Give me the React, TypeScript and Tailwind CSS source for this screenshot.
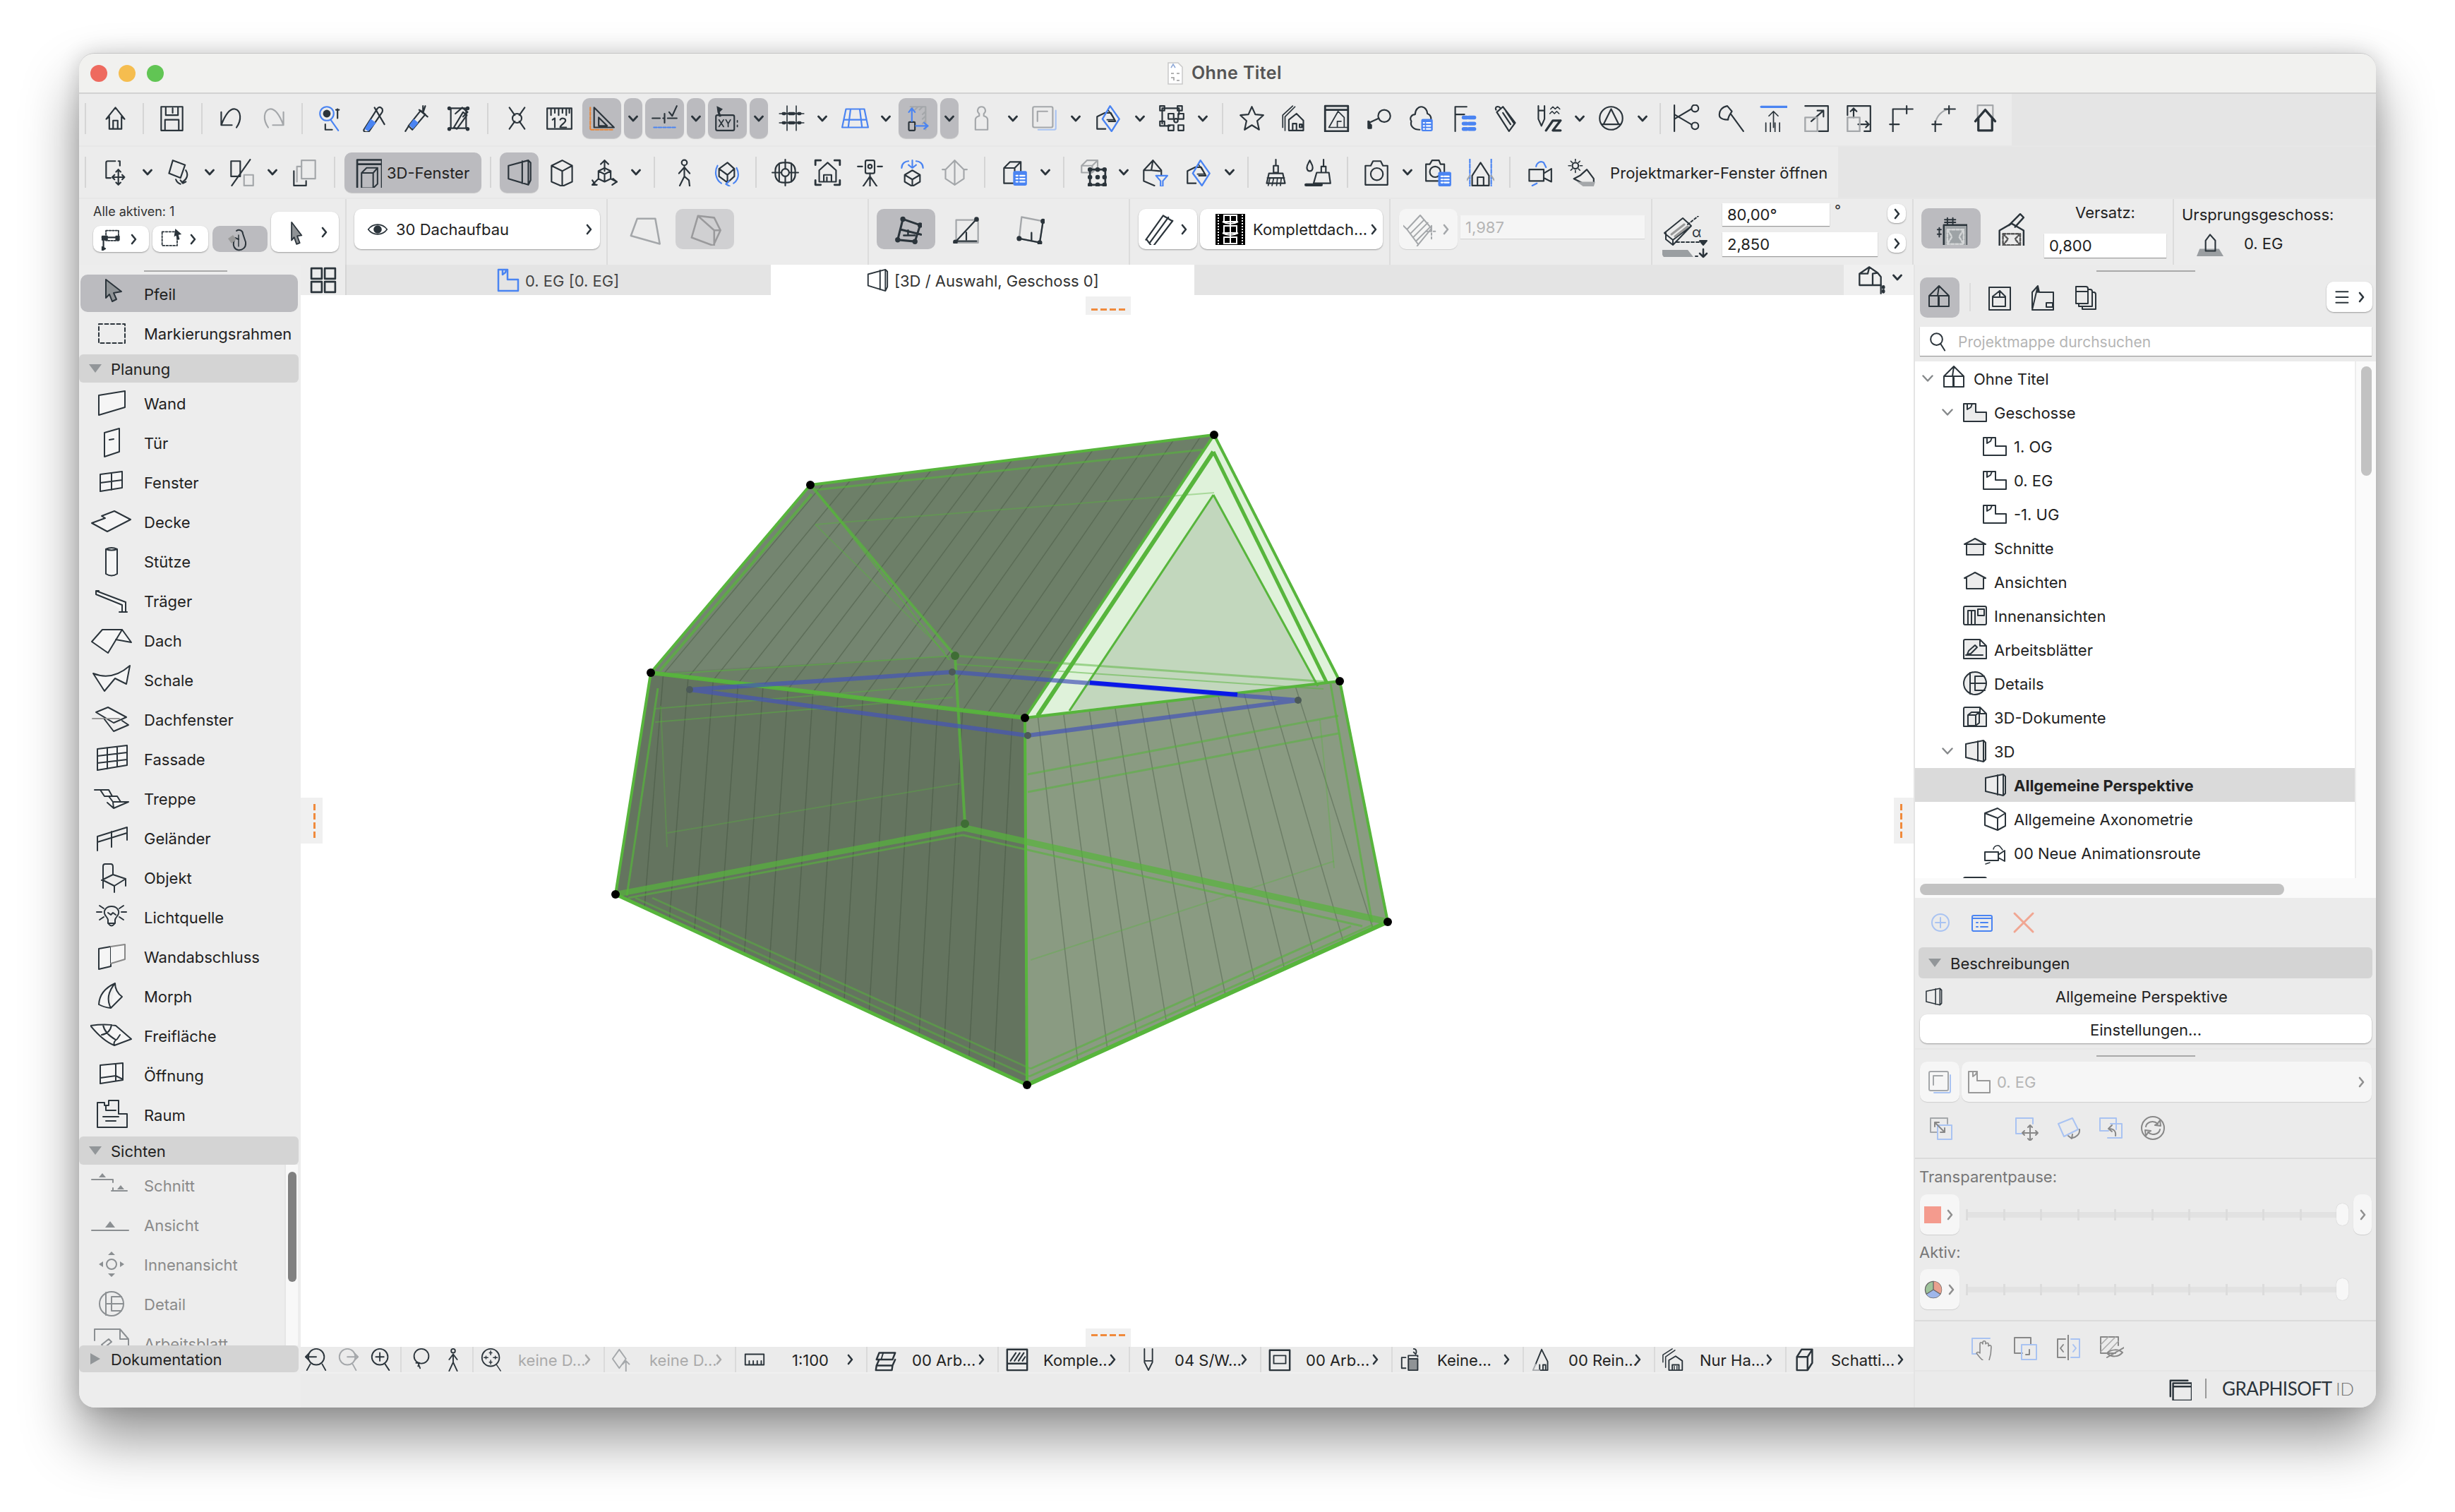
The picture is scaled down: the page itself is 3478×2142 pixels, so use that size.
import React from 'react';

const D = '#2b343b';
const B = '#4a84f2';
const G = '#a4a7aa';
const L = '#a9c3f2';

// toolbar and panel icons, drawn on a 36 x 36 box
const I: Record<string, React.ReactNode> = {
  home: <path d="M10 32V16l-4 3L18 4l12 15-4-3v16zM15 32V21h6v11" />,
  save: <><path d="M4 3h28v31H4zM10 3v11h16V3M19 5v6M9 20h18v14H9z" /></>,
  undo: <path d="M5 10v17h14M5 27C10 14 16 5 23 6c8 2 9 14 2 24" />,
  redo: <path stroke={G} d="M31 10v17H17M31 27C26 14 20 5 13 6 5 8 4 20 11 30" />,
  find: <><circle cx="12" cy="12" r="9" stroke={B} /><circle cx="12" cy="12" r="5" fill={D} stroke="none" /><path stroke={B} d="M17 20l10 14" /><path d="M26 6v12M24 7h4M10 26v7h9" /></>,
  dropper: <><path d="M5 33L23 5c3-3 8 0 6 5L12 35c-3 2-8 1-7-2z" /><path fill={B} stroke="none" d="M6 32l8-13 7 5-10 11z" /><path d="M19 4l13 22" /></>,
  syringe: <><path d="M4 35l5-8M8 28L24 8l6 5-17 20z" /><path fill={B} stroke="none" d="M9 27l6-8 6 5-7 8z" /><path d="M27 2v8M22 7l11 9M30 2l-3 9" /></>,
  hammer: <><path d="M8 5h20v26H8z" /><path d="M12 30L24 10l5 4-13 18zM14 12l9-8 7 6-6 6" /><path strokeWidth="5" d="M6 5v.1M30 5v.1M6 32v.1M30 32v.1" /></>,
  ex: <><circle cx="18" cy="18" r="6" /><path d="M8 4l7 10M28 4l-7 10M8 32l7-10M28 32l-7-10" /></>,
  ruler: <><path d="M2 5h32v27H2zM7 5v9M12 5v6M17 5v9M22 5v6M27 5v9M31 5v6M2 32h32" /><path d="M9 20l3-2v12M19 20c2-3 7-2 7 1s-7 6-7 9h8" /></>,
  angle: <><path d="M8 4l26 26H8z M14 17l11 11H14z" /><path stroke="#e8873a" strokeDasharray="4 2" d="M3 4v29h31" /></>,
  snap: <><path d="M2 18h10M16 18h2M22 18h12M18 12v12M24 10l4 5 6-13" /><path stroke={B} strokeDasharray="4 2" d="M4 30h28" /></>,
  xy: <><path fill={D} stroke="none" d="M4 2l8 4-4 4 2 6H7L5 10z" /><rect x="3" y="14" width="24" height="20" rx="2" /><path strokeWidth="1.6" d="M7 20l6 9M13 20l-6 9M16 20l3 5 3-5M19 25v4M31 21v2M31 27v2" /></>,
  grid: <><path d="M12 2v32M24 2v32M2 12h32M2 24h32" strokeWidth="1.5" /><path strokeWidth="4" d="M7 12h2M15 12h6M27 12h2M7 24h2M15 24h6M27 24h2" /></>,
  floor: <path stroke={B} d="M6 6h24l5 24H1zM4 20h28M12 6l-3 24M24 6l3 24" />,
  offset: <><path stroke={G} d="M8 3h20M28 3v30M12 3l-4 4M18 3l-4 4M24 3l-4 4M28 9l-4 4M28 15l-4 4M28 21l-4 4" /><rect x="6" y="23" width="8" height="11" rx="1" /><path stroke={B} d="M10 22V6M6 10l4-5 4 5M15 28h15M26 24l5 4-5 4" /></>,
  figure: <path stroke={G} d="M18 3a5 5 0 0 1 3 9v3c4 1 5 3 5 5v13H10V20c0-2 1-4 5-5v-3a5 5 0 0 1 3-9z" />,
  layers: <><rect x="3" y="3" width="26" height="27" rx="2" stroke={G} /><path stroke={G} d="M9 22V9h13" /><path stroke={L} d="M33 8v23a2 2 0 0 1-2 2H10" /></>,
  diamond: <><path d="M14 32H3V16l10-5h8l6 11H18" /><path stroke={B} strokeWidth="2.2" d="M20 2l12 17-10 16-12-16z" /><path d="M18 8l8 12-10 0" strokeWidth="1.5" /></>,
  group: <><path d="M6 5h22M6 5v20M10 28h6M28 5v8" /><rect x="3" y="2" width="6" height="6" /><rect x="26" y="2" width="6" height="6" /><rect x="14" y="12" width="7" height="7" /><rect x="27" y="12" width="7" height="7" /><rect x="14" y="27" width="7" height="7" /><rect x="27" y="27" width="7" height="7" /><rect x="3" y="22" width="6" height="6" /><circle cx="24" cy="21" r="2.5" /></>,
  star: <path d="M18 3l4.5 10 10.5 1-8 7.5 2.5 11.5-9.500-6-9.500 6 2.500-11.500-8-7.500 10.500-1z" />,
  house2: <><path d="M6 34V16L19 3M3 30V14L16 2" strokeWidth="1.6" /><path d="M11 34V20l10-8 9 9v13zM16 34v-9h5v9M25 26h3v4h-3z" /></>,
  sheet: <><path strokeWidth="2.600" d="M3 2h30v33H3zM3 7h30" /><path d="M20 9L8 30h24M20 9l8 8v13h-9v-8h5" strokeWidth="1.600" /></>,
  key: <><circle cx="25" cy="15" r="8" /><path d="M18 18L5 24M4 22l3 6M5 22v9" /><path fill={D} d="M4 23l4 4v4H4z" /></>,
  cloud: <><path d="M16 33C8 33 3 28 5 22c-3-5 1-9 5-9 0-6 4-10 8-10 5 0 8 5 8 9 4 1 6 6 4 9" /><rect x="18" y="19" width="15" height="16" rx="2" fill={B} stroke="none" /><path stroke="#fff" d="M21 24h1M25 24h5M21 28h1M25 28h5M21 32h1M25 32h5" /></>,
  flag: <><path d="M7 35V3h15M7 13h12M7 22v13" /><path stroke={B} strokeWidth="5" d="M18 17h4M25 17h7M18 25h4M25 25h7M18 32h4M25 32h7" /></>,
  tag: <path d="M6 10L14 3l16 21-8 11zM11 5C8 1 3 3 5 7M14 11l10 15M18 9l10 15" />,
  pencils: <><path d="M5 2v17l4 9 4-9V2M5 8h8" /><path d="M21 6l3-3 3 3 3-3 3 3M20 12l3-3 3 3 3-3 3 3" strokeWidth="1.500" /><path strokeWidth="3" d="M15 34l9-13h10M24 34l10-13M34 34H24" /></>,
  tri: <><circle cx="18" cy="18" r="15" /><path d="M18 6L8 26h20zM6 26h24" /></>,
  cut: <><path d="M1 1v34" /><path d="M1 19l22-13M1 13l22 13" /><circle cx="28" cy="5" r="4.500" /><circle cx="28" cy="28" r="4.500" /></>,
  axe: <path d="M3 16C1 8 7 3 13 2l6 7c-3 5-5 7-5 11-4 0-9-1-11-4zM18 13l16 22" />,
  liftup: <><path stroke={B} strokeWidth="3" d="M2 3h34" /><path d="M18 30V9M12 15l6-6 6 6M8 24v12M14 24v12M20 24v12M26 24v12" strokeWidth="1.600" /></>,
  fit1: <><path d="M4 2h30v33h-12M12 22L28 8M20 8h8v8" /><rect x="4" y="17" width="16" height="18" stroke={G} strokeWidth="2.200" /></>,
  fit2: <><path d="M4 2h30v33h-8M12 17V5M8 9l4-4 4 4M18 26h14M28 22l4 4-4 4M4 2v12" /><rect x="4" y="17" width="16" height="18" stroke={G} strokeWidth="2.200" /></>,
  corner: <path d="M8 26V6h26M4 26h12M8 22v14M26 2v10" />,
  curve: <><path stroke={G} d="M8 26C9 16 16 8 26 6" /><path d="M4 26h12M8 22v14M26 2v10M20 6h14" /></>,
  houseup: <><path stroke={G} d="M8 16V1h20v15" /><path strokeWidth="3" d="M9 34V17L5 22 18 7l13 15-4-5v17z" /></>,
  move: <><path d="M16 3H6a2 2 0 0 0-2 2v20h6M20 3h2v6" /><path d="M20 14v20M12 24h16M17 17l3-3 3 3M17 31l3 3 3-3M15 21l-3 3 3 3M25 21l3 3-3 3" /></>,
  rotate: <><path d="M10 2L26 8l-6 17-15-6z" /><path d="M27 15c4 6 1 12-4 15M20 28l3 4 4-2M14 27c1 3 3 5 6 6" /></>,
  percent: <><path d="M4 3h12v20H4z" /><path d="M29 1L5 35" /><path stroke={G} d="M21 21h12v14H21z" /></>,
  copies: <><path stroke={G} d="M14 2h18v24H14z" /><path stroke={G} d="M8 10h6M8 10v20" /><path d="M4 16v19h16v-6" /></>,
  win3d: <><path d="M2 1h34v41H2zM2 7h34" strokeWidth="2.600" /><path d="M8 19l7-7h15v22l-6 6H8zM8 19h16v21M24 19l6-7" /></>,
  persp: <path d="M4 9L30 2v32L4 26zM30 2l3 3v23l-3 6M22 3v29" />,
  cube: <path d="M4 9L18 2l13 7v21l-13 6-14-6zM4 9l14 7 13-7M18 16v20" />,
  axes: <><path d="M18 2v14M13 7l5-5 5 5M6 34L2 28M2 34h6M34 30l-6 4M34 30l-5-4" /><path d="M10 16l8-4 8 4v10l-8 4-8-4zM10 16l8 4 8-4M18 20v10M2 34l8-8M34 30l-8-4" /></>,
  walk: <><circle cx="18" cy="5" r="3.500" /><path d="M18 10v13l-6 12M18 23l6 5 1 8M11 19l7-8 7 8" /></>,
  rotcube: <><path d="M8 13l11-8 9 8v10l-9 8-11-8zM8 13l11 8 9-8M19 21v10" /><path stroke={B} d="M6 9C2 16 3 27 11 32M31 12c4 8 2 16-4 20M22 36l-5-3 4-4" /></>,
  target: <><rect x="5" y="5" width="26" height="26" rx="10" /><circle cx="18" cy="18" r="5" /><path d="M1 18h12M23 18h12M18 1v12M18 23v12M10 6v24M26 6v24" /></>,
  hframe: <><path d="M2 8V2h7M27 2h7v6M2 28v6h7M27 34h7v-6" strokeWidth="2.600" /><path d="M7 30V15L18 5l11 10v15zM13 30v-9h10v9M17 30v-6" /></>,
  theodolite: <><rect x="12" y="2" width="12" height="17" rx="2" /><circle cx="18" cy="10" r="2.500" /><path d="M2 10h6M28 10h6M18 19v4M18 23L9 36M18 23l9 13M18 23v13" /></>,
  cubearrow: <><path d="M8 21l10-6 10 6v9l-10 6-10-6zM8 21l10 6 10-6M18 27v9" /><path stroke={B} d="M18 12V2M13 8l5 4 5-4M4 12c0-6 5-9 9-9M32 12c0-6-5-9-9-9" /></>,
  diamondg: <path stroke={G} d="M18 2l12 12v12L18 34 6 26V14zM18 2v32M2 14h4M30 14h4" />,
  cubelist: <><path d="M4 12l8-8h14v16M4 12h14v10M18 12l8-8M4 12v20h12" /><rect x="16" y="16" width="18" height="19" rx="2" fill={B} stroke="none" /><path stroke="#fff" d="M20 22h2M25 22h6M20 26h2M25 26h6M20 30h2M25 30h6" /></>,
  groupg: <><path stroke={G} d="M3 9l7-7h14v9l-7 7H3zM3 9h14v9M17 9l7-7" /><path strokeWidth="2.500" d="M14 14h20v20H14z" /><path strokeWidth="6" d="M14 14v.1M24 14v.1M33 14v.1M14 24v.1M24 24v.1M33 24v.1M14 34v.1M24 34v.1M33 34v.1" /></>,
  hfilter: <><path d="M4 15L16 2l11 13v6M16 2l-2 13L4 15v14l14 6M14 15l11 1" /><path stroke={B} d="M20 22h15l-6 7v7h-3v-7z" /></>,
  brush: <><path d="M18 1v8M15 9h6v9H15zM9 19h18l3 13H6zM7 25h22" /><path strokeWidth="1.600" d="M10 26l-2 9M15 26l-2 9M20 26l-1 9M25 26l-1 9" /></>,
  brush2: <><path d="M25 1v9M22 10h6v8h-6zM16 18h16l2 14H12zM5 6C2 11 3 16 7 16s5-5 2-10L7 2z" /><path strokeWidth="4" d="M2 34h20" /></>,
  camera: <><path d="M4 9h7l3-6h10l3 6h6v25H4z" /><circle cx="19" cy="20" r="8" /></>,
  camlist: <><path d="M2 7h5l3-5h9l2 5h5v22H2z" /><circle cx="14" cy="17" r="7" /><rect x="18" y="17" width="17" height="19" rx="2" fill={B} stroke="none" /><path stroke="#fff" d="M22 23h2M26 23h6M22 27h2M26 27h6M22 31h2M26 31h6" /></>,
  hlines: <><path stroke={B} strokeDasharray="5 2" d="M4 0v36M32 0v36" /><path d="M18 5L7 22v13h22V22zM14 35V24h8v11" /><path stroke={G} d="M4 22l-4 6M32 22l4 6" /></>,
  video: <><path d="M5 14h19v15H5zM24 19l10-6v17l-10-5" /><path stroke={B} d="M14 10C15 5 20 2 24 5l3 6M9 35l6-3" /></>,
  sun: <><circle cx="10" cy="9" r="4" /><path strokeWidth="1.500" d="M10 0v3M10 15v3M1 9h3M16 9h3M4 3l2 2M14 13l2 2M16 3l-2 2M4 15l2-2" /><path d="M16 22l9-8 9 12v6H20L8 26z" /><path fill={G} stroke="none" d="M12 30l8 6h14l2-6z" /></>,
  marq1: <><path strokeDasharray="3 2" d="M8 4h20v16H8z" /><path strokeWidth="2.500" d="M2 15h24M4 15v18" /><path fill={D} d="M2 13h8v6H2zM24 13h5v6h-5zM2 30l5 3-5 3z" /></>,
  marq2: <><path strokeDasharray="3 2.500" d="M3 6h24v22H3z" /><path fill={D} stroke="none" d="M24 1l10 9-5 1 2 7-3 1-3-7-3 2z" /></>,
  magnet: <><path d="M13 6c4-3 9 0 9 4l4 12c1 8-5 12-11 11-5-1-7-6-6-11l2-6 5 2" /><path d="M16 12v16" strokeWidth="1.500" /><path fill="#999" stroke="none" d="M1 17l7-5 5 6-7 6z" /></>,
  arrowfill: <path fill="#8f9396" d="M8 2l16 21-7 1 4 11-5 2-4-11-4 5z" />,
  eye: <><path d="M2 18c8-11 24-11 32 0-8 11-24 11-32 0z" /><circle cx="18" cy="18" r="7" fill={D} stroke="none" /></>,
  trap: <path stroke={G} d="M10 6h20l5 28L3 25z" />,
  pent: <path stroke="#9a9a9c" d="M10 3l18 2 7 14-8 17L3 27zM10 3l18 16 7 0M28 19v17" />,
  roof1: <><path d="M8 30L14 6l20 7-6 19zM8 30l20 2M11 18l24 6" strokeWidth="2.500" /><path d="M15 25h13M20 25v-6" /><path strokeWidth="6" d="M14 6v.1M34 13v.1M8 30v.1M28 32v.1" /></>,
  roof2: <><path stroke={G} d="M5 6h28v29H5z" /><path d="M3 35L31 5M5 33h26M18 22v9" /><path strokeWidth="6" d="M31 5v.1M4 34v.1" /></>,
  roof3: <><path stroke={G} d="M8 3l26 5-4 26-25-5z" /><path d="M34 8l-4 26M5 29l25 5M20 22v9" /><path strokeWidth="6" d="M34 8v.1M30 34v.1M5 29v.1" /></>,
  hatch: <path strokeWidth="1.800" d="M2 30L22 2M6 34L28 4M10 38L33 8M3 30l6 8M22 2l10 6" />,
  hatchg: <><path stroke={G} strokeWidth="1.500" d="M4 18L18 3l12 14-14 17zM8 22L22 8M11 26l15-15M14 30l14-14M16 34l-4 6M4 18l-4-4" /><path stroke={G} strokeWidth="1.500" strokeDasharray="2 2" d="M24 20h12M30 14v14" /></>,
  slab1: <><path d="M10 14h26v26H10z" /><path fill="#9ea3a6" stroke="none" d="M11 15h24v24H11z" /><path stroke="#d3d5d6" strokeDasharray="3 2" d="M14 19h18v16H14zM14 19l5 8-5 8M32 19l-5 8 5 8" /><path strokeWidth="1.500" d="M14 6v8M20 6v8M11 8h12M11 11h12M3 19h4M3 24h4M5 17v10" /></>,
  slab2: <><path d="M3 20l14-8 14 8v21H3z" /><path stroke="#555" strokeDasharray="3 2" d="M7 24h20v13H7zM7 24l6 6-6 7M27 24l-6 6 6 7" /><path d="M14 14L27 1l4 4-10 11" /></>,
  story: <path d="M2 6h17v12h15v13H2zM7 6v8l5-3 2-5" />,
  storyf: <path fill="#ececec" d="M2 6h17v12h15v13H2zM7 6v8l5-3 2-5" />,
  gridv: <path d="M2 2h14v14H2zM20 2h14v14H20zM2 20h14v14H2zM20 20h14v14H20z" strokeWidth="2.500" />,
  storyb: <path stroke={B} strokeWidth="2.500" d="M4 3h13v14h15v16H4zM10 3v7l4-3 1-4" />,
  hset: <><path d="M2 24V10L14 2l10 7 4 5v10zM14 2l-2 8H2M24 9l-6 1M18 10v14" /><path strokeWidth="4" d="M31 26v1M31 31v1" /><path d="M28 24v10" /></>,
  house: <path d="M3 30V15L17 1l14 14v15zM17 1l-2 14H3M15 15h16M16 15v15M17 30V17" />,
  hdoc: <><path d="M3 3h30v32H3z" /><path d="M8 30V16l10-8 8 8v14zM18 8v9H8M18 17h8v13" /></>,
  layout: <path d="M4 33V10L12 1v9M12 1l2 9h20v25H4zM24 25h9v6h-9z" />,
  pubs: <path d="M6 2h14a3 3 0 0 1 3 3v21H6zM6 9h16M23 6h3a3 3 0 0 1 3 3v21H10v-3M29 10h2a3 3 0 0 1 3 3v21H15v-3" />,
  stor: <><path fill="#9a9ea1" stroke="none" d="M4 25h26l6 10H0z" /><path d="M12 28V14L18 6l7 8v14zM18 6l-6 8" /></>,
  sect: <path d="M3 13L18 5l15 8-3 0v15H6V13zM6 13h24" fill="#ececec" />,
  elev: <path d="M3 13L18 5l15 8-3 0v15H6V13z" fill="#ececec" />,
  inter: <><rect x="2" y="5" width="32" height="26" rx="2" fill="#ececec" /><path d="M8 11h10v20H8zM13 11v20M22 9h9v9h-9z" /></>,
  work: <><path d="M4 4h21l9 9v18H2V6a2 2 0 0 1 2-2zM25 4v9h9M5 26h24" fill="#ececec" /><path d="M7 25l2-5 9-8 3 3-9 9z" /></>,
  detail: <><circle cx="18" cy="18" r="16" fill="#ececec" /><path d="M11 3v30M11 18h23M18 18V8h13M18 18v10h14" /></>,
  doc3d: <><path d="M4 4h21l9 9v18H2V6a2 2 0 0 1 2-2zM25 4v9h9" fill="#ececec" /><path d="M8 15l5-4h11v15l-5 4H8zM8 15h11v15M19 15l5-4" /></>,
  perspw: <path d="M5 8L30 3v30L5 27zM30 3l3 3v24l-3 3M22 4v28" fill="#ececec" />,
  axon: <path d="M4 10l18-7 11 7v18l-11 6-18-7zM4 10l18 7 11-7M22 17v17" />,
  anim: <><path d="M4 17h19v12H4zM23 21l9-6v15l-9-5" /><path strokeWidth="1.500" d="M16 13c1-5 7-7 10-3l3 4M5 34l6-2" /></>,
  plus: <><circle cx="18" cy="18" r="12" stroke={L} /><path stroke={L} d="M18 11v14M11 18h14" /></>,
  list: <><rect x="4" y="8" width="28" height="22" rx="2" stroke={B} /><path stroke={B} d="M4 12h28M10 18h2M16 18h10M10 24h2M16 24h10" /></>,
  close: <path stroke="#f1a692" strokeWidth="3" d="M5 5l26 26M31 5L5 31" />,
  dup: <><rect x="3" y="3" width="27" height="27" rx="2" stroke={G} /><path stroke={G} d="M9 22V9h13" /><path stroke={L} d="M33 8v23a2 2 0 0 1-2 2H10" /></>,
  scale: <><path stroke={G} d="M4 24V4h24v8M4 24h10" /><path stroke={L} d="M14 14h20v20H14z" /><path stroke="#888" d="M10 10l14 14M10 16v-6h6M24 18v6h-6" /></>,
  movel: <><path stroke={L} d="M28 12V4H4v22h8" /><path stroke="#888" d="M24 14v22M13 25h22M21 17l3-3 3 3M21 33l3 3 3-3M16 22l-3 3 3 3M32 22l3 3-3 3" /></>,
  rotl: <><path stroke={L} d="M4 12L24 4l8 16-20 10z" /><path stroke="#888" d="M34 20c1 7-5 11-10 12M18 29l5 4 1-6" /></>,
  mirrorl: <><path stroke={L} d="M26 20V4H3v18h12M18 12h16v20H14" /><path stroke="#888" d="M20 14l-5 5 5 4M16 19c6 0 10 3 9 10" /></>,
  sync: <><circle cx="18" cy="18" r="16" stroke="#888" /><path stroke="#888" d="M8 16c1-6 10-10 17-4l-4 2 8 1-1-8-3 4M28 20c-1 6-10 10-17 4l4-2-8-1 1 8 3-4" /></>,
  hand: <><path stroke={L} d="M28 5H3v22h6" /><path stroke="#888" d="M18 36c-4-3-7-8-9-10 1-2 3-2 5 0V13c0-3 3-3 4 0v-2c0-3 4-3 4 0v2c1-2 4-2 4 0v3c2-2 4-1 4 1 0 7-1 13-3 19" strokeWidth="1.600" /></>,
  copyl: <><path stroke="#888" d="M26 14V4H3v22h11" /><path stroke={L} d="M13 14h21v21H13z" /><path stroke="#888" d="M24 21v7h-5" /></>,
  split: <><path stroke="#888" d="M14 6H3v26h11M11 14l-4 5 4 5" /><path stroke={L} d="M22 6h12v26H22M25 14l4 5-4 5" /><path stroke="#888" d="M18 0v38" /></>,
  hidden: <><path stroke="#888" d="M24 26H3V3h25v12" /><path stroke="#aaa" strokeWidth="1.500" d="M3 14L14 3M3 24L24 3M12 26L28 9" /><path stroke="#888" d="M12 26c6-6 16-6 22-1-6 7-16 7-22 1zM12 32L36 18" /></>,
  zback: <><circle cx="18" cy="14" r="12" /><path d="M2 14h16M7 9l-5 5 5 5M9 25L4 34M27 25l5 9" /></>,
  zfwd: <><circle cx="16" cy="14" r="12" stroke={G} /><path stroke={G} d="M16 14h16M27 9l5 5-5 5M24 25l5 9" /></>,
  zin: <><circle cx="16" cy="14" r="12" /><path d="M16 8v12M10 14h12M24 25l6 9" /></>,
  lasso: <><circle cx="18" cy="13" r="11" /><path d="M13 23l3 8M10 23l5 0-2 5" /></>,
  man: <><circle cx="18" cy="5" r="3" /><path d="M18 10v12l-6 13M18 22l6 13M12 18l6-8 6 8" /></>,
  zfit: <><circle cx="16" cy="15" r="13" /><path strokeWidth="1.500" d="M16 5v6M14 8h4M16 25v-6M14 22h4M6 15h6M9 13v4M26 15h-6M23 13v4M25 26l6 9" /></>,
  dgray: <><path stroke={G} d="M12 3l10 14-10 14L2 17z" /><path stroke={G} d="M22 36V20M17 25l5-5 5 5" /></>,
  scalebar: <path d="M4 10h28v16H4zM4 26h28M10 26v-6M16 26v-6M22 26v-6M28 26v-6" />,
  stack: <><path strokeWidth="2.600" d="M8 8h24l-4 10H4zM8 18l-4 9h24l4-9M4 27l-1 7h24l1-7" /><path d="M14 8l-3 10" /></>,
  fillz: <><path strokeWidth="2.600" d="M3 3h30v31H3zM3 24h30" /><path strokeWidth="2.200" d="M8 20L16 8M14 20l8-12M20 20l8-12M26 20l4-6" /></>,
  pen: <path d="M12 2v20l6 12 6-12V2M12 20h12" />,
  boxz: <><path strokeWidth="2.600" d="M3 4h30v30H3z" /><path d="M9 12h18v12H9z" /></>,
  rot2: <><path d="M10 15H4v16h6" /><path fill="#8f9396" d="M14 17h14v17H14z" /><path d="M14 15V12h14v2M22 2c4 0 5 4 3 8l-3-3" /></>,
  renov: <><path d="M17 3l-9 22M17 3l9 18v13H14v-8" /><path stroke={G} d="M8 25l-4 9h10" /><path d="M19 34v-8h4v8" /></>,
  hs3: <><path d="M6 30V14l14-10M2 22V11L16 2" strokeWidth="1.600" /><path d="M11 34V19l10-6 10 7v14zM16 34v-8h10v8" /><path d="M19 28v5M23 28v5" strokeWidth="1.500" /></>,
  cube3: <path strokeWidth="2.600" d="M6 14L13 3h16v20l-7 11H6zM6 14h16v20M22 14l7-11" />,
  windows: <path d="M4 30V6h26M8 10h28v26H8zM8 15h28" strokeWidth="2.600" />,
  menu: <path strokeWidth="2.400" d="M3 8h22M3 18h22M3 28h22" />,
  search: <><circle cx="15" cy="14" r="10" strokeWidth="2.400" /><path strokeWidth="2.400" d="M22 22l7 11" /></>,
  pstory: <path stroke="#999" d="M4 3h12v13h18v17H4zM10 3v7l4-3 2-4" />,
  pie: <><circle cx="18" cy="18" r="13" fill="#9ec49b" stroke="#666" strokeWidth="1.500" /><path fill="#e9a08e" stroke="none" d="M18 5a13 13 0 0 1 11 20l-11-7z" /><path fill="#9fb6ea" stroke="none" d="M29 25a13 13 0 0 1-22 0l11-7z" /><path stroke="#666" strokeWidth="1.500" d="M18 5v13l11 7M18 18L7 25" /></>,
};

// left toolbox icons, drawn on a 60 x 44 box
const T: Record<string, React.ReactNode> = {
  arrow: <path fill="#8f9396" d="M22 2l22 17-11 2 4 9-6 3-4-10-5 5z" />,
  marquee: <path strokeDasharray="5 3.500" d="M12 8h37v27H12z" />,
  wand: <path fill="#f5f5f5" d="M12 11l37-6v23l-37 11z" />,
  door: <><path fill="#f5f5f5" d="M20 8l21-6v33l-21 7z" /><path d="M27 18l6-1" /></>,
  window: <path fill="#f5f5f5" d="M14 11l31-4v23l-31 5zM30 9v24M14 23l31-4" />,
  slab: <path fill="#f5f5f5" d="M2 24l19-7-5-3 18-7 23 12-33 17z" />,
  column: <path fill="#f5f5f5" d="M22 5v35q8 5 16 0V5q-8-4-16 0q8 3 16 0" />,
  beam: <path fill="#f5f5f5" d="M8 8l42 16v14M8 8v5l37 15v9m-4 1h11M8 8h4" />,
  roof: <path fill="#f5f5f5" d="M2 24L17 7h28L25 40zM45 7l13 18-22-4" />,
  shell: <path fill="#f5f5f5" d="M4 13q27 11 52-11l-5 26-16-8-15 18z" />,
  skylight: <><path fill="#f5f5f5" d="M8 12l17-7 26 14-18 8z" /><path stroke="#999" d="M3 21h38" /><path d="M20 22l13 17 21-9-9-6" /></>,
  curtain: <path fill="#f5f5f5" d="M10 8l42-5v28l-42 7zM10 18l42-5M10 28l42-5M24 6v30M38 5v28" />,
  stair: <path fill="#f5f5f5" d="M6 10h20l5 9M14 10l6 9h18l5 8M26 19l6 8h22l-21 9-9-8M32 27l1 9" />,
  railing: <path d="M10 40V20l42-13v18M10 28l42-13M30 13v22" />,
  object: <path d="M18 26V6q0-3 3-3h8q3 0 3 4v11M16 26l16-8 18 6v10M18 26l16 8 16-10M34 34v9M18 26v11" />,
  lamp: <path d="M30 7c7 0 11 5 10 10-1 4-4 5-5 9v5h-10v-5c-1-4-4-5-5-9-1-5 3-10 10-10zM25 16l4 3 3-3 4 3M26 32q4 5 8 0M9 15h7M44 15h7M13 6l6 4M47 6l-6 4M13 26l6-4M47 26l-6-4" />,
  wallend: <><path fill="#f5f5f5" d="M12 11l17-3v28l-17 4z" /><path stroke="#888" fill="#f5f5f5" d="M29 8l20-3v21l-20 6" /></>,
  morph: <path fill="#f5f5f5" d="M12 34q1-20 23-30 0 12 10 19l-16 16q-10-1-17-5zM35 4q-15 18-6 35" />,
  mesh: <path fill="#f5f5f5" d="M0 8q22-3 36 0l22 19-24 9q-16-6-34-28zM18 7q2 12 18 21M30 7q-2 12-14 14M34 36q-2-5 4-9l4-6" />,
  opening: <path fill="#f5f5f5" d="M14 8l32-3v24l-32 5zM36 6v24M14 26l22-3 10 5" />,
  zone: <path d="M10 5h10v4l6 0V2h14v19h12v19H10zM22 16v-6M18 25h22M22 31h14M22 16h14" />,
  section: <><path stroke="#8b8f92" d="M2 14h30v4M30 30h22" /><path fill="#8b8f92" stroke="none" d="M12 11l5-6 5 6zM38 28l5-6 5 6z" /><path stroke="#8b8f92" d="M32 26v4" /></>,
  elevation: <><path stroke="#8b8f92" d="M2 30h52" /><path fill="#8b8f92" stroke="none" d="M21 26l7-9 7 9z" /></>,
  interior: <><circle cx="30" cy="22" r="7" stroke="#8b8f92" /><path fill="#8b8f92" stroke="none" d="M30 4l5 5H25zM30 40l5-5H25zM12 22l6-4v8zM48 22l-6-4v8z" /></>,
  detail: <><circle cx="30" cy="22" r="17" stroke="#8b8f92" /><path stroke="#8b8f92" d="M22 6v32M22 22h25M30 22V12h14M30 22v10h14" /></>,
  worksheet: <path stroke="#8b8f92" d="M6 18V2h36l12 14v24H6M42 2v14h12M16 24l10-8 4 4-10 8z" />,
};

const Icon = ({ n, w = 36, h = 36, className = '' }: { n: string; w?: number; h?: number; className?: string }) => (
  <svg viewBox="0 0 36 36" width={w} height={h} fill="none" stroke={D} strokeWidth={2} strokeLinejoin="round" strokeLinecap="round" className={`shrink-0 ${className}`}>
    {I[n]}
  </svg>
);

const DownChev = () => (
  <svg viewBox="0 0 14 10" width="14" height="10" fill="none" stroke={D} strokeWidth="2.800" strokeLinecap="round" strokeLinejoin="round">
    <path d="M1.500 2L7 8l5.500-6" />
  </svg>
);

const RightChev = ({ c = D }: { c?: string }) => (
  <svg viewBox="0 0 9 16" width="9" height="16" fill="none" stroke={c} strokeWidth="2.600" strokeLinecap="round" strokeLinejoin="round" className="shrink-0">
    <path d="M2 2l5 6-5 6" />
  </svg>
);

const Cell = ({ n, className = '' }: { n: string; className?: string }) => (
  <div className={`w-[60px] shrink-0 flex justify-center ${className}`}><Icon n={n} w={39} h={39} /></div>
);

const Dd = ({ className = '' }: { className?: string }) => (
  <div className={`w-[28px] shrink-0 flex justify-center ${className}`}><DownChev /></div>
);

const Sep = ({ className = '' }: { className?: string }) => <div className={`w-[2px] h-[44px] shrink-0 bg-[#d5d5d5] ${className}`} />;

// pressed button of the toolbars
const Act = ({ n, className = '' }: { n: string; className?: string }) => (
  <div className={`w-[55px] h-[57px] shrink-0 rounded-[10px] bg-[#bbbbbf] shadow-[0_1px_1px_rgba(0,0,0,0.15)] flex items-center justify-center ${className}`}><Icon n={n} w={39} h={39} /></div>
);

const ActDd = ({ className = '' }: { className?: string }) => (
  <div className={`w-[26px] h-[57px] shrink-0 rounded-[10px] bg-[#bbbbbf] shadow-[0_1px_1px_rgba(0,0,0,0.15)] flex items-center justify-center ${className}`}><DownChev /></div>
);

const TitleBar = () => (
  <div className="h-[57px] shrink-0 flex items-center bg-[#f1f1ef] border-b-2 border-[#d2d2d2]">
    <div className="w-[1541px] shrink-0 flex items-center gap-[16px] pl-[16px]">
      <div className="w-[24px] h-[24px] rounded-full bg-[#ee6a5f]" />
      <div className="w-[24px] h-[24px] rounded-full bg-[#f5bd4f]" />
      <div className="w-[24px] h-[24px] rounded-full bg-[#61c554]" />
    </div>
    <svg viewBox="0 0 24 32" width="24" height="32" fill="#fff" stroke="#c9c9c9" strokeWidth="1.500">
      <path d="M2 1h14l6 6v24H2z" />
      <path stroke="#8fa9d8" d="M6 8l3-5 3 5" />
      <path stroke="#999" d="M6 16h4M14 16h4M6 22h4v4M14 26h4" />
    </svg>
    <span className="ml-[11px] text-[25px] tracking-[0.4px] font-semibold text-[#555]">Ohne Titel</span>
  </div>
);

const ToolbarOne = () => (
  <div className="h-[73px] shrink-0 flex bg-[#e5e5e5]">
    <div className="w-[2738px] flex items-center pb-[4px] bg-[#ececec]">
      <Sep className="ml-[8px]" />
      <Cell n="home" className="ml-[11px]" />
      <Sep className="ml-[9px]" />
      <Cell n="save" className="ml-[9px]" />
      <Sep className="ml-[12px]" />
      <Cell n="undo" className="ml-[10px]" />
      <Cell n="redo" />
      <Sep className="ml-[10px]" />
      <Cell n="find" className="ml-[10px]" />
      <Cell n="dropper" />
      <Cell n="syringe" />
      <Cell n="hammer" />
      <Sep className="ml-[11px]" />
      <Cell n="ex" className="ml-[10px]" />
      <Cell n="ruler" />
      <Act n="angle" className="ml-[3px]" />
      <ActDd className="ml-[4px]" />
      <Act n="snap" className="ml-[4px]" />
      <ActDd className="ml-[4px]" />
      <Act n="xy" className="ml-[4px]" />
      <ActDd className="ml-[4px]" />
      <Cell n="grid" className="ml-[3px]" />
      <Dd />
      <Cell n="floor" className="ml-[2px]" />
      <Dd />
      <Act n="offset" className="ml-[4px]" />
      <ActDd className="ml-[4px]" />
      <Cell n="figure" className="ml-[2px]" />
      <Dd className="ml-[1px]" />
      <Cell n="layers" />
      <Dd className="ml-[1px]" />
      <Cell n="diamond" className="ml-[2px]" />
      <Dd className="ml-[1px]" />
      <Cell n="group" />
      <Dd className="ml-[1px]" />
      <Sep className="ml-[13px]" />
      <Cell n="star" className="ml-[10px]" />
      <Cell n="house2" />
      <Cell n="sheet" />
      <Cell n="key" />
      <Cell n="cloud" />
      <Cell n="flag" />
      <Cell n="tag" />
      <Cell n="pencils" />
      <Dd className="ml-[1px]" />
      <Cell n="tri" />
      <Dd className="ml-[1px]" />
      <Sep className="ml-[10px]" />
      <Cell n="cut" className="ml-[7px]" />
      <Cell n="axe" className="ml-[2px]" />
      <Cell n="liftup" />
      <Cell n="fit1" />
      <Cell n="fit2" />
      <Cell n="corner" />
      <Cell n="curve" />
      <Cell n="houseup" />
    </div>
  </div>
);

const ToolbarTwo = () => (
  <div className="h-[74px] shrink-0 flex bg-[#e5e5e5] border-t-2 border-[#e7e7e7]">
    <div className="w-[2492px] flex items-center bg-[#ececec]">
      <Sep className="ml-[8px]" />
      <Cell n="move" className="ml-[13px]" />
      <Dd />
      <Cell n="rotate" />
      <Dd />
      <Cell n="percent" className="ml-[1px]" />
      <Dd />
      <Cell n="copies" className="ml-[1px]" />
      <Sep className="ml-[12px]" />
      <div className="ml-[13px] w-[194px] h-[57px] shrink-0 rounded-[10px] bg-[#bbbbbf] shadow-[0_1px_1px_rgba(0,0,0,0.15)] flex items-center pl-[16px]">
        <Icon n="win3d" w={37} h={44} />
        <span className="ml-[7px] pt-[2px] text-[22px] text-[#222]">3D-Fenster</span>
      </div>
      <Sep className="ml-[12px]" />
      <Act n="persp" className="ml-[12px]" />
      <Cell n="cube" className="ml-[3px]" />
      <Cell n="axes" />
      <Dd className="ml-[1px]" />
      <Sep className="ml-[11px]" />
      <Cell n="walk" className="ml-[11px]" />
      <Cell n="rotcube" />
      <Sep className="ml-[11px]" />
      <Cell n="target" className="ml-[10px]" />
      <Cell n="hframe" />
      <Cell n="theodolite" />
      <Cell n="cubearrow" />
      <Cell n="diamondg" />
      <Sep className="ml-[12px]" />
      <Cell n="cubelist" className="ml-[11px]" />
      <Dd />
      <Sep className="ml-[11px]" />
      <Cell n="groupg" className="ml-[10px]" />
      <Dd />
      <Cell n="hfilter" className="ml-[-1px]" />
      <Cell n="diamond" className="ml-[3px]" />
      <Dd />
      <Sep className="ml-[11px]" />
      <Cell n="brush" className="ml-[8px]" />
      <Cell n="brush2" />
      <Sep className="ml-[11px]" />
      <Cell n="camera" className="ml-[9px]" />
      <Dd className="ml-[1px]" />
      <Cell n="camlist" className="ml-[-1px]" />
      <Cell n="hlines" />
      <Sep className="ml-[11px]" />
      <Cell n="video" className="ml-[10px]" />
      <Cell n="sun" />
      <span className="ml-[11px] pt-[2px] text-[22px] tracking-[0.08px] text-[#222] whitespace-nowrap">Projektmarker-Fenster öffnen</span>
    </div>
  </div>
);

const whiteBtn = 'bg-white rounded-[10px] shadow-[0_1px_2px_rgba(0,0,0,0.35)] flex items-center shrink-0';
const field = 'bg-white shadow-[0_1px_1px_rgba(0,0,0,0.35)] flex items-center pl-[7px] text-[22px] text-[#222]';

const InfoBar = () => (
  <div className="h-[95px] shrink-0 flex bg-[#ececec] border-t-2 border-[#e7e7e7]">
    <div className="w-[379px] shrink-0 border-r-2 border-[#dcdcdc] flex items-end pl-[20px] pb-[18px]">
      <div className="flex flex-col">
        <span className="text-[18px] text-[#333] leading-[26px] mb-[7px]">Alle aktiven: 1</span>
        <div className="flex">
          <div className={`${whiteBtn} w-[79px] h-[37px] pl-[11px] gap-[10px]`}><Icon n="marq1" w={32} h={32} /><RightChev /></div>
          <div className={`${whiteBtn} w-[79px] h-[37px] ml-[5px] pl-[11px] gap-[10px]`}><Icon n="marq2" w={32} h={32} /><RightChev /></div>
          <div className="w-[78px] h-[37px] ml-[6px] rounded-[10px] bg-[#bbbbbf] flex items-center justify-center shrink-0"><Icon n="magnet" w={36} h={36} /></div>
        </div>
      </div>
      <div className={`${whiteBtn} w-[96px] h-[57px] ml-[5px] pl-[22px] gap-[17px]`}><Icon n="arrowfill" w={32} h={36} /><RightChev /></div>
    </div>
    <div className="w-[370px] shrink-0 border-r-2 border-[#dcdcdc] pt-[14px] pl-[11px]">
      <div className={`${whiteBtn} w-[348px] h-[57px] pl-[18px]`}>
        <Icon n="eye" w={30} h={30} />
        <span className="ml-[11px] pt-[1px] text-[22px] text-[#222]">30 Dachaufbau</span>
        <div className="ml-auto mr-[11px]"><RightChev /></div>
      </div>
    </div>
    <div className="w-[370px] shrink-0 border-r-2 border-[#dcdcdc] pt-[14px] pl-[29px] flex items-start">
      <div className="w-[46px] h-[57px] flex items-center justify-center"><Icon n="trap" w={46} h={46} /></div>
      <div className="w-[83px] h-[57px] ml-[21px] rounded-[10px] bg-[#d0d0d2] flex items-center justify-center"><Icon n="pent" w={46} h={46} /></div>
    </div>
    <div className="w-[370px] shrink-0 border-r-2 border-[#dcdcdc] pt-[14px] pl-[11px] flex items-start">
      <div className="w-[83px] h-[57px] rounded-[10px] bg-[#bbbbbf] flex items-center justify-center"><Icon n="roof1" w={44} h={44} /></div>
      <div className="w-[60px] h-[57px] ml-[14px] flex items-center justify-center"><Icon n="roof2" w={40} h={40} /></div>
      <div className="w-[60px] h-[57px] ml-[30px] flex items-center justify-center"><Icon n="roof3" w={42} h={42} /></div>
    </div>
    <div className="w-[369px] shrink-0 border-r-2 border-[#dcdcdc] pt-[14px] pl-[12px] flex items-start">
      <div className={`${whiteBtn} w-[83px] h-[57px] pl-[8px] gap-[8px]`}><Icon n="hatch" w={44} h={44} /><RightChev /></div>
      <div className={`${whiteBtn} w-[259px] h-[57px] ml-[4px] pl-[22px]`}>
        <svg viewBox="0 0 42 44" width="42" height="44" className="shrink-0">
          <rect width="42" height="44" fill="#000" />
          <path fill="none" stroke="#fff" strokeWidth="2" strokeDasharray="2 2" d="M4 1v42M38 1v42" />
          <path fill="none" stroke="#fff" strokeWidth="2" d="M12 2h18v9H12zM10 11q11 6 22 0M12 17h18v10H12zM10 27q11 6 22 0M12 33h18v9H12zM21 2v40" />
        </svg>
        <span className="ml-[11px] pt-[1px] text-[22px] text-[#222] whitespace-nowrap">Komplettdach...</span>
        <div className="ml-[5px]"><RightChev /></div>
      </div>
    </div>
    <div className="w-[371px] shrink-0 border-r-2 border-[#dcdcdc] pt-[14px] pl-[12px] flex items-start">
      <div className="w-[83px] h-[57px] rounded-[10px] bg-[#f5f5f5] shadow-[0_1px_1px_rgba(0,0,0,0.12)] flex items-center pl-[6px] gap-[8px] shrink-0"><Icon n="hatchg" w={48} h={48} /><RightChev c={G} /></div>
      <div className="w-[261px] h-[33px] ml-[4px] mt-[9px] bg-[#f5f5f5] shadow-[0_1px_1px_rgba(0,0,0,0.1)] flex items-center pl-[7px] text-[22px] text-[#b5b5b5]">1,987</div>
    </div>
    <div className="w-[370px] shrink-0 border-r-2 border-[#dcdcdc] flex">
      <div className="w-[99px] shrink-0 pl-[14px] pt-[24px]">
        <svg viewBox="0 0 66 62" width="66" height="62" fill="none" stroke={D} strokeWidth="2" strokeLinecap="round" strokeLinejoin="round">
          <path d="M3 24l26-21 12 11-26 20-10-8zM5 24v9l10 8 0-7M15 41l26-27" />
          <path stroke="#999" strokeWidth="3" d="M13 26l18-14M18 29l18-14" />
          <path strokeDasharray="3 3" d="M36 12l15-12" />
          <text x="42" y="30" fontSize="20" fontFamily="Inter" fill={D} stroke="none">α</text>
          <path strokeDasharray="4 3" d="M20 37h34" />
          <path fill={D} d="M53 35h10l-5 6z" />
          <path fill="#9a9ea1" stroke="none" d="M0 48h36l8 10H2q-4-5-2-10z" />
          <path strokeDasharray="3 3" d="M47 57h5" />
          <path strokeWidth="2.500" d="M58 47v11M53 53l5 5 5-5" />
        </svg>
      </div>
      <div className="flex flex-col pt-[6px] w-[220px]">
        <div className="flex items-start">
          <div className={`${field} w-[152px] h-[32px]`}>80,00°</div>
          <span className="ml-[7px] text-[20px] leading-[20px] text-[#333]">°</span>
        </div>
        <div className={`${field} w-[220px] h-[34px] mt-[9px]`}>2,850</div>
      </div>
      <div className="flex flex-col pt-[7px] pl-[14px]">
        <div className={`${whiteBtn} w-[26px] h-[27px] justify-center`}><RightChev /></div>
        <div className={`${whiteBtn} w-[26px] h-[27px] mt-[15px] justify-center`}><RightChev /></div>
      </div>
    </div>
    <div className="w-[369px] shrink-0 border-r-2 border-[#dcdcdc] flex pl-[11px] pt-[13px]">
      <div className="w-[84px] h-[57px] shrink-0 rounded-[10px] bg-[#bbbbbf] flex items-center justify-center"><Icon n="slab1" w={46} h={46} /></div>
      <div className="w-[44px] h-[57px] shrink-0 ml-[23px] flex items-center justify-center"><Icon n="slab2" w={44} h={48} /></div>
      <div className="flex flex-col items-center ml-[23px] mt-[-10px]">
        <span className="text-[22px] leading-[32px] text-[#222]">Versatz:</span>
        <div className={`${field} w-[173px] h-[34px] mt-[14px]`}>0,800</div>
      </div>
    </div>
    <div className="flex-1 flex flex-col pl-[11px] pt-[6px]">
      <span className="text-[22px] leading-[32px] text-[#222]">Ursprungsgeschoss:</span>
      <div className="flex items-center mt-[6px] ml-[21px]">
        <Icon n="stor" w={38} h={38} />
        <span className="ml-[29px] text-[22px] text-[#222]">0. EG</span>
      </div>
    </div>
  </div>
);

const tools: [string, string][] = [
  ['wand', 'Wand'], ['door', 'Tür'], ['window', 'Fenster'], ['slab', 'Decke'], ['column', 'Stütze'], ['beam', 'Träger'],
  ['roof', 'Dach'], ['shell', 'Schale'], ['skylight', 'Dachfenster'], ['curtain', 'Fassade'], ['stair', 'Treppe'],
  ['railing', 'Geländer'], ['object', 'Objekt'], ['lamp', 'Lichtquelle'], ['wallend', 'Wandabschluss'], ['morph', 'Morph'],
  ['mesh', 'Freifläche'], ['opening', 'Öffnung'], ['zone', 'Raum'],
];

const ToolIcon = ({ n }: { n: string }) => (
  <svg viewBox="0 0 60 44" width="60" height="44" fill="none" stroke={D} strokeWidth="2" strokeLinejoin="round" strokeLinecap="round" className="shrink-0">
    {T[n]}
  </svg>
);

const Tool = ({ n, t, gray = false }: { n: string; t: string; gray?: boolean }) => (
  <div className="h-[56px] shrink-0 flex items-center pl-[16px]">
    <ToolIcon n={n} />
    <span className={`ml-[16px] pt-[2px] text-[22px] ${gray ? 'text-[#8a8a8a]' : 'text-[#1f1f1f]'}`}>{t}</span>
  </div>
);

const Header = ({ t, open = true, className = '' }: { t: string; open?: boolean; className?: string }) => (
  <div className={`shrink-0 flex items-center rounded-[6px] bg-[#d4d4d4] ${className}`}>
    <div className="w-[45px] shrink-0 flex justify-center">
      {open ? (
        <svg viewBox="0 0 18 12" width="18" height="12"><path fill="#929699" d="M0 0h18L9 12z" /></svg>
      ) : (
        <svg viewBox="0 0 14 16" width="14" height="16"><path fill="#929699" d="M0 0l14 8-14 8z" /></svg>
      )}
    </div>
    <span className="pt-[2px] text-[22px] text-[#222]">{t}</span>
  </div>
);

const LeftPanel = () => (
  <div className="w-[314px] shrink-0 flex flex-col bg-[#ededed]">
    <div className="h-[14px] shrink-0 flex justify-center pt-[8px] pr-[12px]"><div className="w-[118px] h-[2px] bg-[#a9a9a9]" /></div>
    <div className="h-[53px] w-[308px] ml-[2px] shrink-0 flex items-center rounded-[10px] bg-[#bbbbbf] pl-[14px]">
      <ToolIcon n="arrow" />
      <span className="ml-[16px] pt-[2px] text-[22px] text-[#1f1f1f]">Pfeil</span>
    </div>
    <div className="h-[58px] shrink-0 flex items-center pl-[16px] mt-[2px]">
      <ToolIcon n="marquee" />
      <span className="ml-[16px] text-[22px] text-[#1f1f1f] whitespace-nowrap">Markierungsrahmen</span>
    </div>
    <Header t="Planung" className="h-[40px] w-[311px]" />
    <div className="h-[1px] shrink-0" />
    {tools.map(([n, t]) => <Tool key={t} n={n} t={t} />)}
    <Header t="Sichten" className="h-[40px] w-[311px] mt-[3px]" />
    <div className="h-[256px] shrink-0 flex overflow-hidden">
      <div className="w-[291px] shrink-0 flex flex-col pt-[1px]">
        <Tool n="section" t="Schnitt" gray />
        <Tool n="elevation" t="Ansicht" gray />
        <Tool n="interior" t="Innenansicht" gray />
        <Tool n="detail" t="Detail" gray />
        <Tool n="worksheet" t="Arbeitsblatt" gray />
      </div>
      <div className="w-[19px] shrink-0 bg-[#f8f8f8] border-l-2 border-[#e6e6e6] pl-[3px] pt-[10px]">
        <div className="w-[12px] h-[156px] rounded-full bg-[#808080]" />
      </div>
    </div>
    <Header t="Dokumentation" open={false} className="h-[38px] w-[311px]" />
  </div>
);

const Dashes = () => (
  <div className="flex gap-[4px]">
    <div className="w-[9px] h-[3px] bg-[#f08a3c]" />
    <div className="w-[9px] h-[3px] bg-[#f08a3c]" />
    <div className="w-[9px] h-[3px] bg-[#f08a3c]" />
    <div className="w-[9px] h-[3px] bg-[#f08a3c]" />
  </div>
);

const DashesV = () => (
  <div className="flex flex-col gap-[4px]">
    <div className="w-[3px] h-[9px] bg-[#f08a3c]" />
    <div className="w-[3px] h-[9px] bg-[#f08a3c]" />
    <div className="w-[3px] h-[9px] bg-[#f08a3c]" />
    <div className="w-[3px] h-[9px] bg-[#f08a3c]" />
  </div>
);

type P = [number, number];
const mix = (a: P, b: P, t: number): P => [a[0] + (b[0] - a[0]) * t, a[1] + (b[1] - a[1]) * t];
const pts = (...l: P[]) => l.map((p) => p.join(',')).join(' ');

const A: P = [1720, 616];
const Bk: P = [1148, 687];
const C: P = [922, 953];
const Dn: P = [1452, 1017];
const E: P = [1898, 965];
const F: P = [872, 1267];
const Gr: P = [1455, 1537];
const H: P = [1966, 1306];
const BI: P = [1367, 1167];
const J: P = [1353, 929];
const K: P = [1349, 952];
const Lf: P = [977, 977];
const M: P = [1456, 1042];
const N: P = [1839, 992];

const range = (n: number) => Array.from({ length: n }, (_, i) => (i + 0.5) / n);
const GREEN = '#57b53c';

// faint and strong edge lines of the selected roof and walls
const edges: [P, P, number, number][] = [
  [[1155, 694], [1705, 637], 3, 0.6],
  [[1155, 743], [1720, 698], 2, 0.4],
  [[1155, 743], [1339, 924], 2, 0.4],
  [Bk, J, 4, 0.75],
  [[1156, 695], [1345, 935], 2, 0.6],
  [J, [1881, 966], 3, 0.5],
  [[1353, 941], [1875, 976], 2, 0.5],
  [J, [928, 956], 2, 0.5],
  [J, BI, 4, 0.8],
  [F, [1367, 1173], 8, 0.7],
  [[1367, 1173], H, 9, 0.7],
  [[890, 1272], [1364, 1183], 3, 0.6],
  [[1364, 1183], [1930, 1312], 3, 0.6],
  [[924, 1272], [1460, 1514], 3, 0.5],
  [[1460, 1514], [1914, 1312], 3, 0.6],
  [[900, 1272], [1458, 1525], 3, 0.5],
  [[1458, 1525], [1945, 1310], 3, 0.6],
  [[932, 975], [888, 1269], 3, 0.7],
  [[936, 1000], [945, 1200], 2, 0.35],
  [[1885, 969], [1944, 1307], 3, 0.7],
  [[1870, 1020], [1890, 1230], 2, 0.35],
  [[1456, 1097], [1896, 1014], 3, 0.55],
  [[1456, 1122], [1896, 1039], 3, 0.55],
  [[1460, 1360], [1890, 1220], 2, 0.35],
  [[928, 1004], [1350, 969], 2, 0.45],
  [[928, 1023], [1350, 988], 2, 0.45],
  [[945, 1180], [1360, 1110], 2, 0.35],
  [C, Dn, 6, 0.95],
  [Bk, A, 4, 1],
  [Bk, C, 4, 1],
  [[1150, 700], [935, 950], 4, 0.7],
  [C, F, 4, 1],
  [F, Gr, 5, 1],
  [Gr, H, 6, 1],
  [H, E, 4, 1],
  [Dn, Gr, 4, 1],
  [Dn, E, 4, 1],
  [A, Dn, 4, 1],
  [A, E, 4, 1],
  [[1719, 640], [1470, 1014], 6, 1],
  [[1719, 640], [1880, 968], 5, 1],
  [[1719, 701], [1515, 1007], 3, 1],
  [[1719, 701], [1867, 972], 3, 1],
];

const HouseModel = () => (
  <svg viewBox="426 418 2285 1490" className="absolute inset-0 w-full h-full">
    <polygon points={pts(A, Dn, E)} fill="#dff2da" />
    <polygon points={pts([1719, 701], [1515, 1007], [1867, 972])} fill="#c2d7bd" />
    <polygon points={pts(Bk, A, Dn, C)} fill="#6d7f68" />
    <polygon points={pts(C, Dn, Gr, F)} fill="#64745f" />
    <polygon points={pts(Dn, E, H, Gr)} fill="#8a9b82" />
    <polygon points={pts(Bk, J, C)} fill="#748570" />
    {range(15).map((t) => {
      const a = mix(Bk, A, t);
      const b = mix(C, Dn, t);
      return <line key={`r${t}`} x1={a[0]} y1={a[1]} x2={b[0]} y2={b[1]} stroke="#50604b" strokeWidth="1.500" opacity=".6" />;
    })}
    {range(15).map((t) => {
      const a = mix(C, Dn, t);
      const b = mix(F, Gr, t * 0.91 + 0.04);
      return <line key={`l${t}`} x1={a[0]} y1={a[1]} x2={b[0]} y2={b[1]} stroke="#4b5b47" strokeWidth="1.500" opacity=".6" />;
    })}
    {range(11).map((t) => {
      const a = mix(Dn, E, t * 0.9);
      const b = mix(Gr, H, t * 0.9 + 0.1);
      return <line key={`w${t}`} x1={a[0]} y1={a[1]} x2={b[0]} y2={b[1]} stroke="#5a6b56" strokeWidth="1.500" opacity=".6" />;
    })}
    {edges.map(([a, b, w, o], i) => (
      <line key={i} x1={a[0]} y1={a[1]} x2={b[0]} y2={b[1]} stroke={GREEN} strokeWidth={w} opacity={o} />
    ))}
    <polyline points={pts(Lf, K, N, M, Lf)} fill="none" stroke="#4454b8" strokeWidth="6" opacity=".7" />
    <line x1="1544" y1="967" x2="1753" y2="984" stroke="#0a18e8" strokeWidth="6" />
    {[Lf, K, M, N].map((p, i) => <circle key={i} cx={p[0]} cy={p[1]} r="5" fill="#4c5a58" />)}
    {[J, BI].map((p, i) => <circle key={i} cx={p[0]} cy={p[1]} r="6" fill="#3f6d35" />)}
    {[A, Bk, C, Dn, E, F, Gr, H].map((p, i) => <circle key={i} cx={p[0]} cy={p[1]} r="6" fill="#000" />)}
  </svg>
);

const CenterPanel = () => (
  <div className="w-[2285px] shrink-0 flex flex-col">
    <div className="h-[43px] shrink-0 flex text-[22px]">
      <div className="w-[65px] shrink-0 bg-[#ececec] border-r-2 border-[#d5d5d5] flex items-center justify-center"><Icon n="gridv" w={38} h={38} /></div>
      <div className="w-[601px] shrink-0 bg-[#e4e4e4] flex items-center pl-[211px] text-[#444]">
        <Icon n="storyb" w={36} h={36} />
        <span className="ml-[6px] pt-[2px]">0. EG [0. EG]</span>
      </div>
      <div className="w-[600px] shrink-0 bg-white flex items-center pl-[134px] text-[#333]">
        <Icon n="persp" w={34} h={34} />
        <span className="ml-[7px] pt-[2px]">[3D / Auswahl, Geschoss 0]</span>
      </div>
      <div className="w-[920px] shrink-0 bg-[#e4e4e4]" />
      <div className="flex-1 bg-[#f0f0f0] flex items-center pl-[20px]">
        <Icon n="hset" w={42} h={42} />
        <div className="ml-[7px] mt-[-8px]"><DownChev /></div>
      </div>
    </div>
    <div className="flex-1 relative bg-white">
      <HouseModel />
      <div className="absolute left-[1112px] top-[2px] w-[64px] h-[26px] bg-[#f0f0f0] flex justify-center pt-[17px]"><Dashes /></div>
      <div className="absolute left-[1112px] bottom-0 w-[64px] h-[26px] bg-[#f0f0f0] flex justify-center pt-[8px]"><Dashes /></div>
      <div className="absolute left-0 top-[712px] w-[31px] h-[65px] bg-[#f0f0f0] flex items-center justify-center pl-[8px]"><DashesV /></div>
      <div className="absolute right-0 top-[712px] w-[28px] h-[65px] bg-[#f0f0f0] flex items-center justify-center pr-[8px]"><DashesV /></div>
    </div>
    <StatusBar />
    <div className="h-[50px] shrink-0 bg-[#ebebeb] border-t-2 border-[#f0f0f0]" />
  </div>
);

const Stat = ({ n, t, off = false, far = false }: { n: string; t: string; off?: boolean; far?: boolean }) => (
  <div className="w-[186px] shrink-0 h-full border-r-2 border-[#dadada] flex items-center">
    <Icon n={n} w={34} h={34} className="ml-[9px]" />
    <span className={`pt-[2px] whitespace-nowrap text-[22px] ${far ? 'ml-[36px] w-[78px]' : 'ml-[20px] w-[94px]'} ${off ? 'text-[#aaa]' : 'text-[#222]'}`}>{t}</span>
    <RightChev c={off ? '#aaa' : D} />
  </div>
);

const StatusBar = () => (
  <div className="h-[36px] shrink-0 flex items-center bg-[#ebebeb]">
    <div className="w-[143px] shrink-0 h-full border-r-2 border-[#dadada] flex items-center pl-[5px] gap-[12px]">
      <Icon n="zback" w={34} h={34} />
      <Icon n="zfwd" w={34} h={34} />
      <Icon n="zin" w={34} h={34} />
    </div>
    <div className="w-[102px] shrink-0 h-full border-r-2 border-[#dadada] flex items-center pl-[11px] gap-[11px]">
      <Icon n="lasso" w={34} h={34} />
      <Icon n="man" w={34} h={34} />
    </div>
    <Stat n="zfit" t="keine D..." off />
    <Stat n="dgray" t="keine D..." off />
    <Stat n="scalebar" t="1:100" far />
    <Stat n="stack" t="00 Arb..." />
    <Stat n="fillz" t="Komple..." />
    <Stat n="pen" t="04 S/W..." />
    <Stat n="boxz" t="00 Arb..." />
    <Stat n="rot2" t="Keine..." />
    <Stat n="renov" t="00 Rein..." />
    <Stat n="hs3" t="Nur Ha..." />
    <div className="flex-1 h-full flex items-center">
      <Icon n="cube3" w={34} h={34} className="ml-[9px]" />
      <span className="ml-[20px] pt-[2px] w-[94px] whitespace-nowrap text-[22px] text-[#222]">Schatti...</span>
      <RightChev />
    </div>
  </div>
);

const tree: { n: string; t: string; depth: number; open?: boolean; sel?: boolean }[] = [
  { n: 'house', t: 'Ohne Titel', depth: 0, open: true },
  { n: 'storyf', t: 'Geschosse', depth: 1, open: true },
  { n: 'story', t: '1. OG', depth: 2 },
  { n: 'story', t: '0. EG', depth: 2 },
  { n: 'story', t: '-1. UG', depth: 2 },
  { n: 'sect', t: 'Schnitte', depth: 1 },
  { n: 'elev', t: 'Ansichten', depth: 1 },
  { n: 'inter', t: 'Innenansichten', depth: 1 },
  { n: 'work', t: 'Arbeitsblätter', depth: 1 },
  { n: 'detail', t: 'Details', depth: 1 },
  { n: 'doc3d', t: '3D-Dokumente', depth: 1 },
  { n: 'perspw', t: '3D', depth: 1, open: true },
  { n: 'perspw', t: 'Allgemeine Perspektive', depth: 2, sel: true },
  { n: 'axon', t: 'Allgemeine Axonometrie', depth: 2 },
  { n: 'anim', t: '00 Neue Animationsroute', depth: 2 },
  { n: 'inter', t: '', depth: 1 },
];

const TreeRow = ({ n, t, depth, open, sel }: (typeof tree)[number]) => (
  <div className={`h-[48px] shrink-0 flex items-center ${sel ? 'bg-[#dadada] font-bold' : ''}`}>
    <div className={`shrink-0 flex justify-end ${depth === 0 ? 'w-[26px]' : depth === 1 ? 'w-[54px]' : 'w-[82px]'}`}>
      {open && (
        <svg viewBox="0 0 16 10" width="16" height="10" fill="none" stroke="#85888a" strokeWidth="2.400" strokeLinecap="round" strokeLinejoin="round"><path d="M1.500 1.500L8 8.500l6.500-7" /></svg>
      )}
    </div>
    <Icon n={n} className={depth === 0 ? 'ml-[12px]' : 'ml-[13px]'} />
    <span className="ml-[9px] pt-[1px] text-[22px] text-[#222] whitespace-nowrap">{t}</span>
  </div>
);

const Slider = () => (
  <div className="w-[542px] h-[8px] ml-[9px] shrink-0 bg-[#e2e2e2] flex items-center justify-between">
    <div className="w-[3px] h-[16px] bg-[#dcdcdc]" />
    <div className="w-[3px] h-[16px] bg-[#dcdcdc]" />
    <div className="w-[3px] h-[16px] bg-[#dcdcdc]" />
    <div className="w-[3px] h-[16px] bg-[#dcdcdc]" />
    <div className="w-[3px] h-[16px] bg-[#dcdcdc]" />
    <div className="w-[3px] h-[16px] bg-[#dcdcdc]" />
    <div className="w-[3px] h-[16px] bg-[#dcdcdc]" />
    <div className="w-[3px] h-[16px] bg-[#dcdcdc]" />
    <div className="w-[3px] h-[16px] bg-[#dcdcdc]" />
    <div className="w-[3px] h-[16px] bg-[#dcdcdc]" />
    <div className="w-[17px] h-[31px] rounded-[8px] bg-[#f7f7f7] shadow-[0_0_1px_rgba(0,0,0,0.25)]" />
  </div>
);

const softBtn = 'bg-[#f6f6f6] rounded-[10px] shadow-[0_1px_1px_rgba(0,0,0,0.12)] flex items-center shrink-0';

const RightPanel = () => (
  <div className="flex-1 min-w-0 flex flex-col bg-[#ebebeb] border-l-2 border-[#e4e4e4]">
    <div className="h-[18px] shrink-0 flex justify-center pt-[8px]"><div className="w-[140px] h-[2px] bg-[#a9a9a9]" /></div>
    <div className="h-[57px] shrink-0 flex pl-[7px] pr-[5px]">
      <div className="w-[56px] h-[57px] rounded-[10px] bg-[#bbbbbf] flex items-center justify-center"><Icon n="house" /></div>
      <div className="w-[2px] h-[40px] mt-[8px] ml-[14px] bg-[#dcdcdc]" />
      <div className="flex items-center ml-[23px]">
        <Icon n="hdoc" />
        <Icon n="layout" className="ml-[24px]" />
        <Icon n="pubs" className="ml-[24px]" />
      </div>
      <div className={`${whiteBtn} ml-auto mt-[6px] w-[65px] h-[43px] pl-[11px] gap-[6px]`}><Icon n="menu" w={28} h={30} /><RightChev /></div>
    </div>
    <div className={`${field} h-[41px] mt-[13px] ml-[7px] mr-[6px] !pl-[11px]`}>
      <Icon n="search" w={30} h={30} />
      <span className="ml-[13px] pt-[1px] text-[21px] text-[#b5b5b5]">Projektmappe durchsuchen</span>
    </div>
    <div className="h-[732px] mt-[8px] shrink-0 flex bg-white">
      <div className="w-[623px] shrink-0 flex flex-col overflow-hidden">
        {tree.map((r) => <TreeRow key={r.t || 'more'} {...r} />)}
      </div>
      <div className="flex-1 bg-[#fafafa] border-l-2 border-[#ededed] pl-[7px] pt-[7px]">
        <div className="w-[15px] h-[155px] rounded-full bg-[#c2c2c2]" />
      </div>
    </div>
    <div className="h-[28px] shrink-0 bg-[#fafafa] pl-[7px] pt-[8px]">
      <div className="w-[516px] h-[16px] rounded-full bg-[#c2c2c2]" />
    </div>
    <div className="h-[70px] shrink-0 flex items-center pl-[18px]">
      <Icon n="plus" />
      <Icon n="list" className="ml-[23px]" />
      <Icon n="close" className="ml-[23px]" />
    </div>
    <Header t="Beschreibungen" className="h-[44px] mx-[5px]" />
    <div className="h-[51px] shrink-0 flex items-center pl-[12px]">
      <Icon n="perspw" w={28} h={28} />
      <span className="ml-[159px] pt-[1px] text-[22px] text-[#222]">Allgemeine Perspektive</span>
    </div>
    <div className={`${whiteBtn} h-[41px] ml-[7px] mr-[6px] justify-center pt-[2px] text-[22px] text-[#222]`}>Einstellungen...</div>
    <div className="h-[19px] shrink-0 border-t-2 border-[#e6e6e6] mt-[7px] flex justify-center pt-[8px]"><div className="w-[140px] h-[2px] bg-[#a9a9a9]" /></div>
    <div className="h-[57px] shrink-0 flex pl-[7px] pr-[6px]">
      <div className={`${softBtn} w-[56px] h-[57px] justify-center`}><Icon n="dup" /></div>
      <div className={`${softBtn} flex-1 h-[57px] ml-[3px] pl-[6px]`}>
        <Icon n="pstory" />
        <span className="ml-[8px] text-[22px] text-[#b5b5b5]">0. EG</span>
        <div className="ml-auto mr-[10px]"><RightChev c="#8f8f8f" /></div>
      </div>
    </div>
    <div className="h-[81px] shrink-0 flex items-center pl-[18px] pb-[6px] border-b-2 border-[#dbdbdb]">
      <Icon n="scale" />
      <Icon n="movel" className="ml-[85px]" />
      <Icon n="rotl" className="ml-[24px]" />
      <Icon n="mirrorl" className="ml-[24px]" />
      <Icon n="sync" className="ml-[24px]" />
    </div>
    <div className="h-[50px] shrink-0 flex items-center pl-[6px] text-[22px] text-[#777]">Transparentpause:</div>
    <div className="h-[57px] shrink-0 flex items-center pl-[7px]">
      <div className={`${softBtn} w-[56px] h-[57px] pl-[6px] gap-[8px]`}><div className="w-[24px] h-[24px] bg-[#f49b8e]" /><RightChev c="#8f8f8f" /></div>
      <Slider />
      <div className={`${softBtn} w-[26px] h-[57px] ml-[7px] justify-center`}><RightChev c="#8f8f8f" /></div>
    </div>
    <div className="h-[49px] shrink-0 flex items-center pl-[6px] text-[22px] text-[#777]">Aktiv:</div>
    <div className="h-[57px] shrink-0 flex items-center pl-[7px]">
      <div className={`${softBtn} w-[56px] h-[57px] pl-[3px] gap-[5px]`}><Icon n="pie" w={32} h={32} /><RightChev c="#8f8f8f" /></div>
      <Slider />
    </div>
    <div className="h-[17px] shrink-0 border-b-2 border-[#dbdbdb]" />
    <div className="h-[71px] shrink-0 flex items-center pl-[78px] pt-[4px] border-b-2 border-[#e6e6e6]">
      <Icon n="hand" />
      <Icon n="copyl" className="ml-[24px]" />
      <Icon n="split" className="ml-[25px]" />
      <Icon n="hidden" className="ml-[25px]" />
    </div>
    <div className="flex-1 flex items-center pl-[358px] pb-[4px]">
      <Icon n="windows" w={34} h={34} />
      <div className="w-[2px] h-[28px] ml-[19px] bg-[#999]" />
      <span className="ml-[22px] font-['Lato'] text-[26px] tracking-[-0.5px] text-[#2b343b] whitespace-nowrap">GRAPHISOFT <span className="text-[#777] font-light">ID</span></span>
    </div>
  </div>
);

export default function App() {
  return (
    <div className="w-[3478px] h-[2142px] bg-white overflow-hidden pt-[75px] pl-[112px] font-['Inter',sans-serif] leading-none">
      <div className="w-[3254px] h-[1919px] rounded-[22px] overflow-hidden flex flex-col bg-[#ebebeb] border-t border-[#c6c6c6] shadow-[0_44px_80px_rgba(0,0,0,0.42),0_0_30px_rgba(0,0,0,0.16)]">
        <TitleBar />
        <ToolbarOne />
        <ToolbarTwo />
        <InfoBar />
        <div className="flex-1 min-h-0 flex">
          <LeftPanel />
          <CenterPanel />
          <RightPanel />
        </div>
      </div>
    </div>
  );
}
